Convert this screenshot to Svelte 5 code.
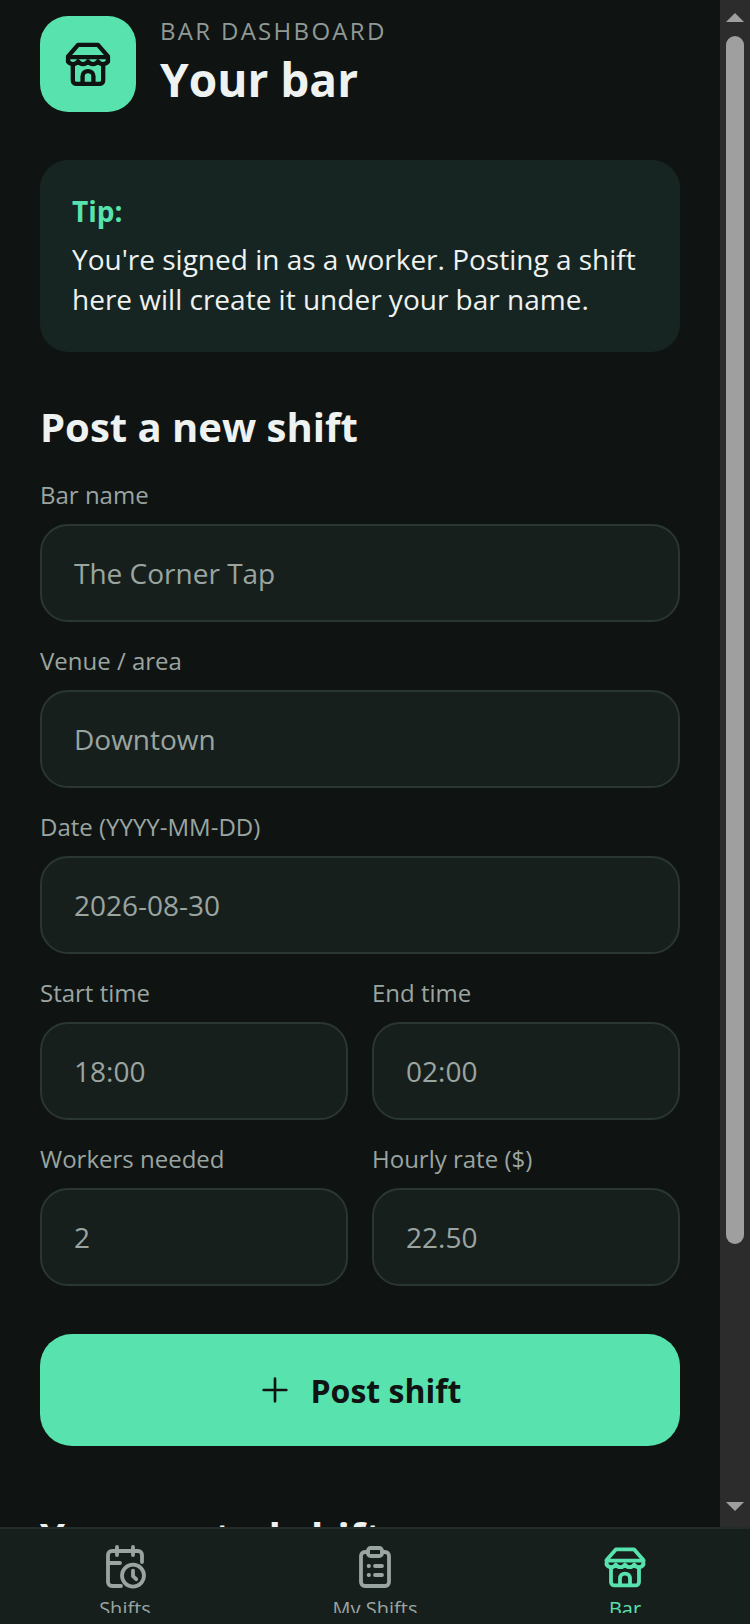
<script lang="ts">
	let form = {
		bar: 'The Corner Tap',
		venue: 'Downtown',
		date: '2026-08-30',
		start: '18:00',
		end: '02:00',
		workers: '2',
		rate: '22.50'
	};
	let tab = 'bar';
	const tabs = [
		{ id: 'shifts', label: 'Shifts' },
		{ id: 'mine', label: 'My Shifts' },
		{ id: 'bar', label: 'Bar' }
	];
</script>

{#snippet storeIcon()}
	<path d="M2.800 10.800V8.500l4.600-5.300h9.200l4.600 5.300v2.300" />
	<path d="M2.800 8.800h18.400" />
	<path d="M2.800 10.800c1.100 1.700 3.500 1.700 4.600 0 1.100 1.700 3.500 1.700 4.600 0 1.100 1.700 3.500 1.700 4.600 0 1.100 1.700 3.500 1.700 4.600 0" />
	<path d="M5 13v6.500c0 1 .7 1.700 1.700 1.700h10.600c1 0 1.700-.7 1.700-1.700V13" />
	<path d="M9.500 21v-3.300c0-1.400 1-2.400 2.500-2.400s2.500 1 2.500 2.400V21" />
{/snippet}

<div class="screen">
	<div class="main">
		<div class="scroll">
			<header>
				<div class="logo">
					<svg viewBox="0 0 24 24" width="52" height="52">{@render storeIcon()}</svg>
				</div>
				<div>
					<div class="eyebrow">BAR DASHBOARD</div>
					<h1>Your bar</h1>
				</div>
			</header>

			<div class="tip">
				<strong>Tip:</strong>
				<p>You're signed in as a worker. Posting a shift here will create it under your bar name.</p>
			</div>

			<h2>Post a new shift</h2>

			<label class="field">
				<span>Bar name</span>
				<input bind:value={form.bar} />
			</label>
			<label class="field">
				<span>Venue / area</span>
				<input bind:value={form.venue} />
			</label>
			<label class="field">
				<span>Date (YYYY-MM-DD)</span>
				<input bind:value={form.date} />
			</label>
			<div class="row">
				<label class="field">
					<span>Start time</span>
					<input bind:value={form.start} />
				</label>
				<label class="field">
					<span>End time</span>
					<input bind:value={form.end} />
				</label>
			</div>
			<div class="row">
				<label class="field">
					<span>Workers needed</span>
					<input bind:value={form.workers} />
				</label>
				<label class="field">
					<span>Hourly rate ($)</span>
					<input bind:value={form.rate} />
				</label>
			</div>

			<button class="post">
				<svg viewBox="0 0 24 24" width="32" height="32"><path d="M12 3.500v17M3.500 12h17" /></svg>
				Post shift
			</button>

			<h2 class="posted">Your posted shifts</h2>
		</div>
		<div class="scrollbar">
			<i class="arrow up"></i>
			<i class="thumb"></i>
			<i class="arrow down"></i>
		</div>
	</div>

	<nav>
		{#each tabs as t}
			<button class="tab" class:active={tab === t.id} on:click={() => (tab = t.id)}>
				<svg viewBox="0 0 24 24" width="48" height="48">
					{#if t.id === 'shifts'}
						<path d="M10 21.500H5.500c-1.200 0-2-.8-2-2V6c0-1.200.8-2 2-2h13c1.200 0 2 .8 2 2v3.500" />
						<path d="M8 2v4M16 2v4M3.500 10h6" />
						<circle cx="16" cy="16.300" r="5.500" />
						<path d="M16 13.800v2.800l1.600 1.500" />
					{:else if t.id === 'mine'}
						<path d="M8.500 4.500H7c-1.200 0-2 .8-2 2v13c0 1.200.8 2 2 2h10c1.200 0 2-.8 2-2v-13c0-1.200-.8-2-2-2h-1.500" />
						<rect x="8.500" y="2.500" width="7" height="4" rx="1.300" />
						<path d="M8.800 11.500h.2M8.800 16h.2M12 11.500h3.500M12 16h3.500" />
					{:else}
						{@render storeIcon()}
					{/if}
				</svg>
				<span>{t.label}</span>
			</button>
		{/each}
	</nav>
</div>

<style>
:global(body) {
	margin: 0;
	background: #0f1312;
}
.screen {
	width: 750px;
	height: 1624px;
	display: flex;
	flex-direction: column;
	overflow: hidden;
	font-family: "Open Sans", sans-serif;
	color: #eef2f0;
	background: #0f1312;
}
.main {
	flex: 1;
	min-height: 0;
	display: flex;
}
.scroll {
	flex: 1;
	min-width: 0;
	overflow: hidden;
	padding: 16px 40px 0;
	box-sizing: border-box;
}
.scrollbar {
	flex: none;
	width: 30px;
	background: #2c2c2c;
	box-sizing: border-box;
	padding: 13px 6px 16px;
	display: flex;
	flex-direction: column;
	align-items: center;
}
.arrow {
	flex: none;
	width: 0;
	height: 0;
	border-left: 9px solid transparent;
	border-right: 9px solid transparent;
}
.arrow.up {
	border-bottom: 9px solid #9f9f9f;
}
.arrow.down {
	border-top: 9px solid #9f9f9f;
	margin-top: auto;
}
.thumb {
	flex: none;
	width: 18px;
	height: 1208px;
	margin-top: 14px;
	border-radius: 9px;
	background: #9f9f9f;
}
header {
	display: flex;
	align-items: center;
	gap: 24px;
	margin-bottom: 48px;
}
.logo {
	width: 96px;
	height: 96px;
	border-radius: 28px;
	background: #58e2ae;
	display: flex;
	align-items: center;
	justify-content: center;
}
.logo svg {
	fill: none;
	stroke: #0f1312;
	stroke-width: 2;
	stroke-linecap: round;
	stroke-linejoin: round;
}
.eyebrow {
	font-size: 24px;
	line-height: 32px;
	letter-spacing: 2.300px;
	color: #8f9a96;
	margin-top: -2px;
}
h1 {
	margin: 0;
	font-size: 46px;
	line-height: 65px;
	font-weight: 700;
}
.tip {
	background: #172522;
	border-radius: 28px;
	padding: 32px 32px 33px;
	margin-bottom: 48px;
}
.tip strong {
	display: block;
	font-size: 28px;
	line-height: 38px;
	color: #58e2ae;
	margin-bottom: 9px;
}
.tip p {
	margin: 0;
	font-size: 28px;
	line-height: 40px;
}
h2 {
	margin: 0 0 24px;
	font-size: 40px;
	line-height: 54px;
	font-weight: 700;
}
.field {
	display: block;
	margin-bottom: 22px;
	min-width: 0;
}
.field span {
	display: block;
	font-size: 24px;
	line-height: 34px;
	color: #9aa5a1;
	margin-bottom: 12px;
}
input {
	display: block;
	width: 100%;
	height: 98px;
	box-sizing: border-box;
	padding: 0 32px;
	background: #171f1d;
	border: 2px solid #2a3633;
	border-radius: 28px;
	font: inherit;
	font-size: 28px;
	color: #9aa5a1;
	outline: none;
}
.row {
	display: grid;
	grid-template-columns: 1fr 1fr;
	gap: 24px;
}
.post {
	width: 100%;
	height: 112px;
	margin-top: 26px;
	border: 0;
	border-radius: 32px;
	background: #58e2ae;
	color: #0f1312;
	font: inherit;
	font-size: 32px;
	font-weight: 700;
	display: flex;
	align-items: center;
	justify-content: center;
	gap: 20px;
}
.post svg {
	fill: none;
	stroke: #0f1312;
	stroke-width: 2;
	stroke-linecap: round;
}
.posted {
	margin-top: 64px;
}
nav {
	flex: none;
	height: 97px;
	box-sizing: border-box;
	display: grid;
	grid-template-columns: repeat(3, 1fr);
	background: #171f1d;
	border-top: 2px solid #232c2a;
}
.tab {
	height: 84px;
	overflow: hidden;
	padding: 14px 0 0;
	border: 0;
	background: none;
	font: inherit;
	color: #9aa5a1;
	display: flex;
	flex-direction: column;
	align-items: center;
}
.tab svg {
	flex: none;
	fill: none;
	stroke: currentColor;
	stroke-width: 1.900;
	stroke-linecap: round;
	stroke-linejoin: round;
}
.tab span {
	font-size: 20px;
	line-height: 28px;
	margin-top: 4px;
	flex: none;
}
.tab.active {
	color: #58e2ae;
}
</style>
